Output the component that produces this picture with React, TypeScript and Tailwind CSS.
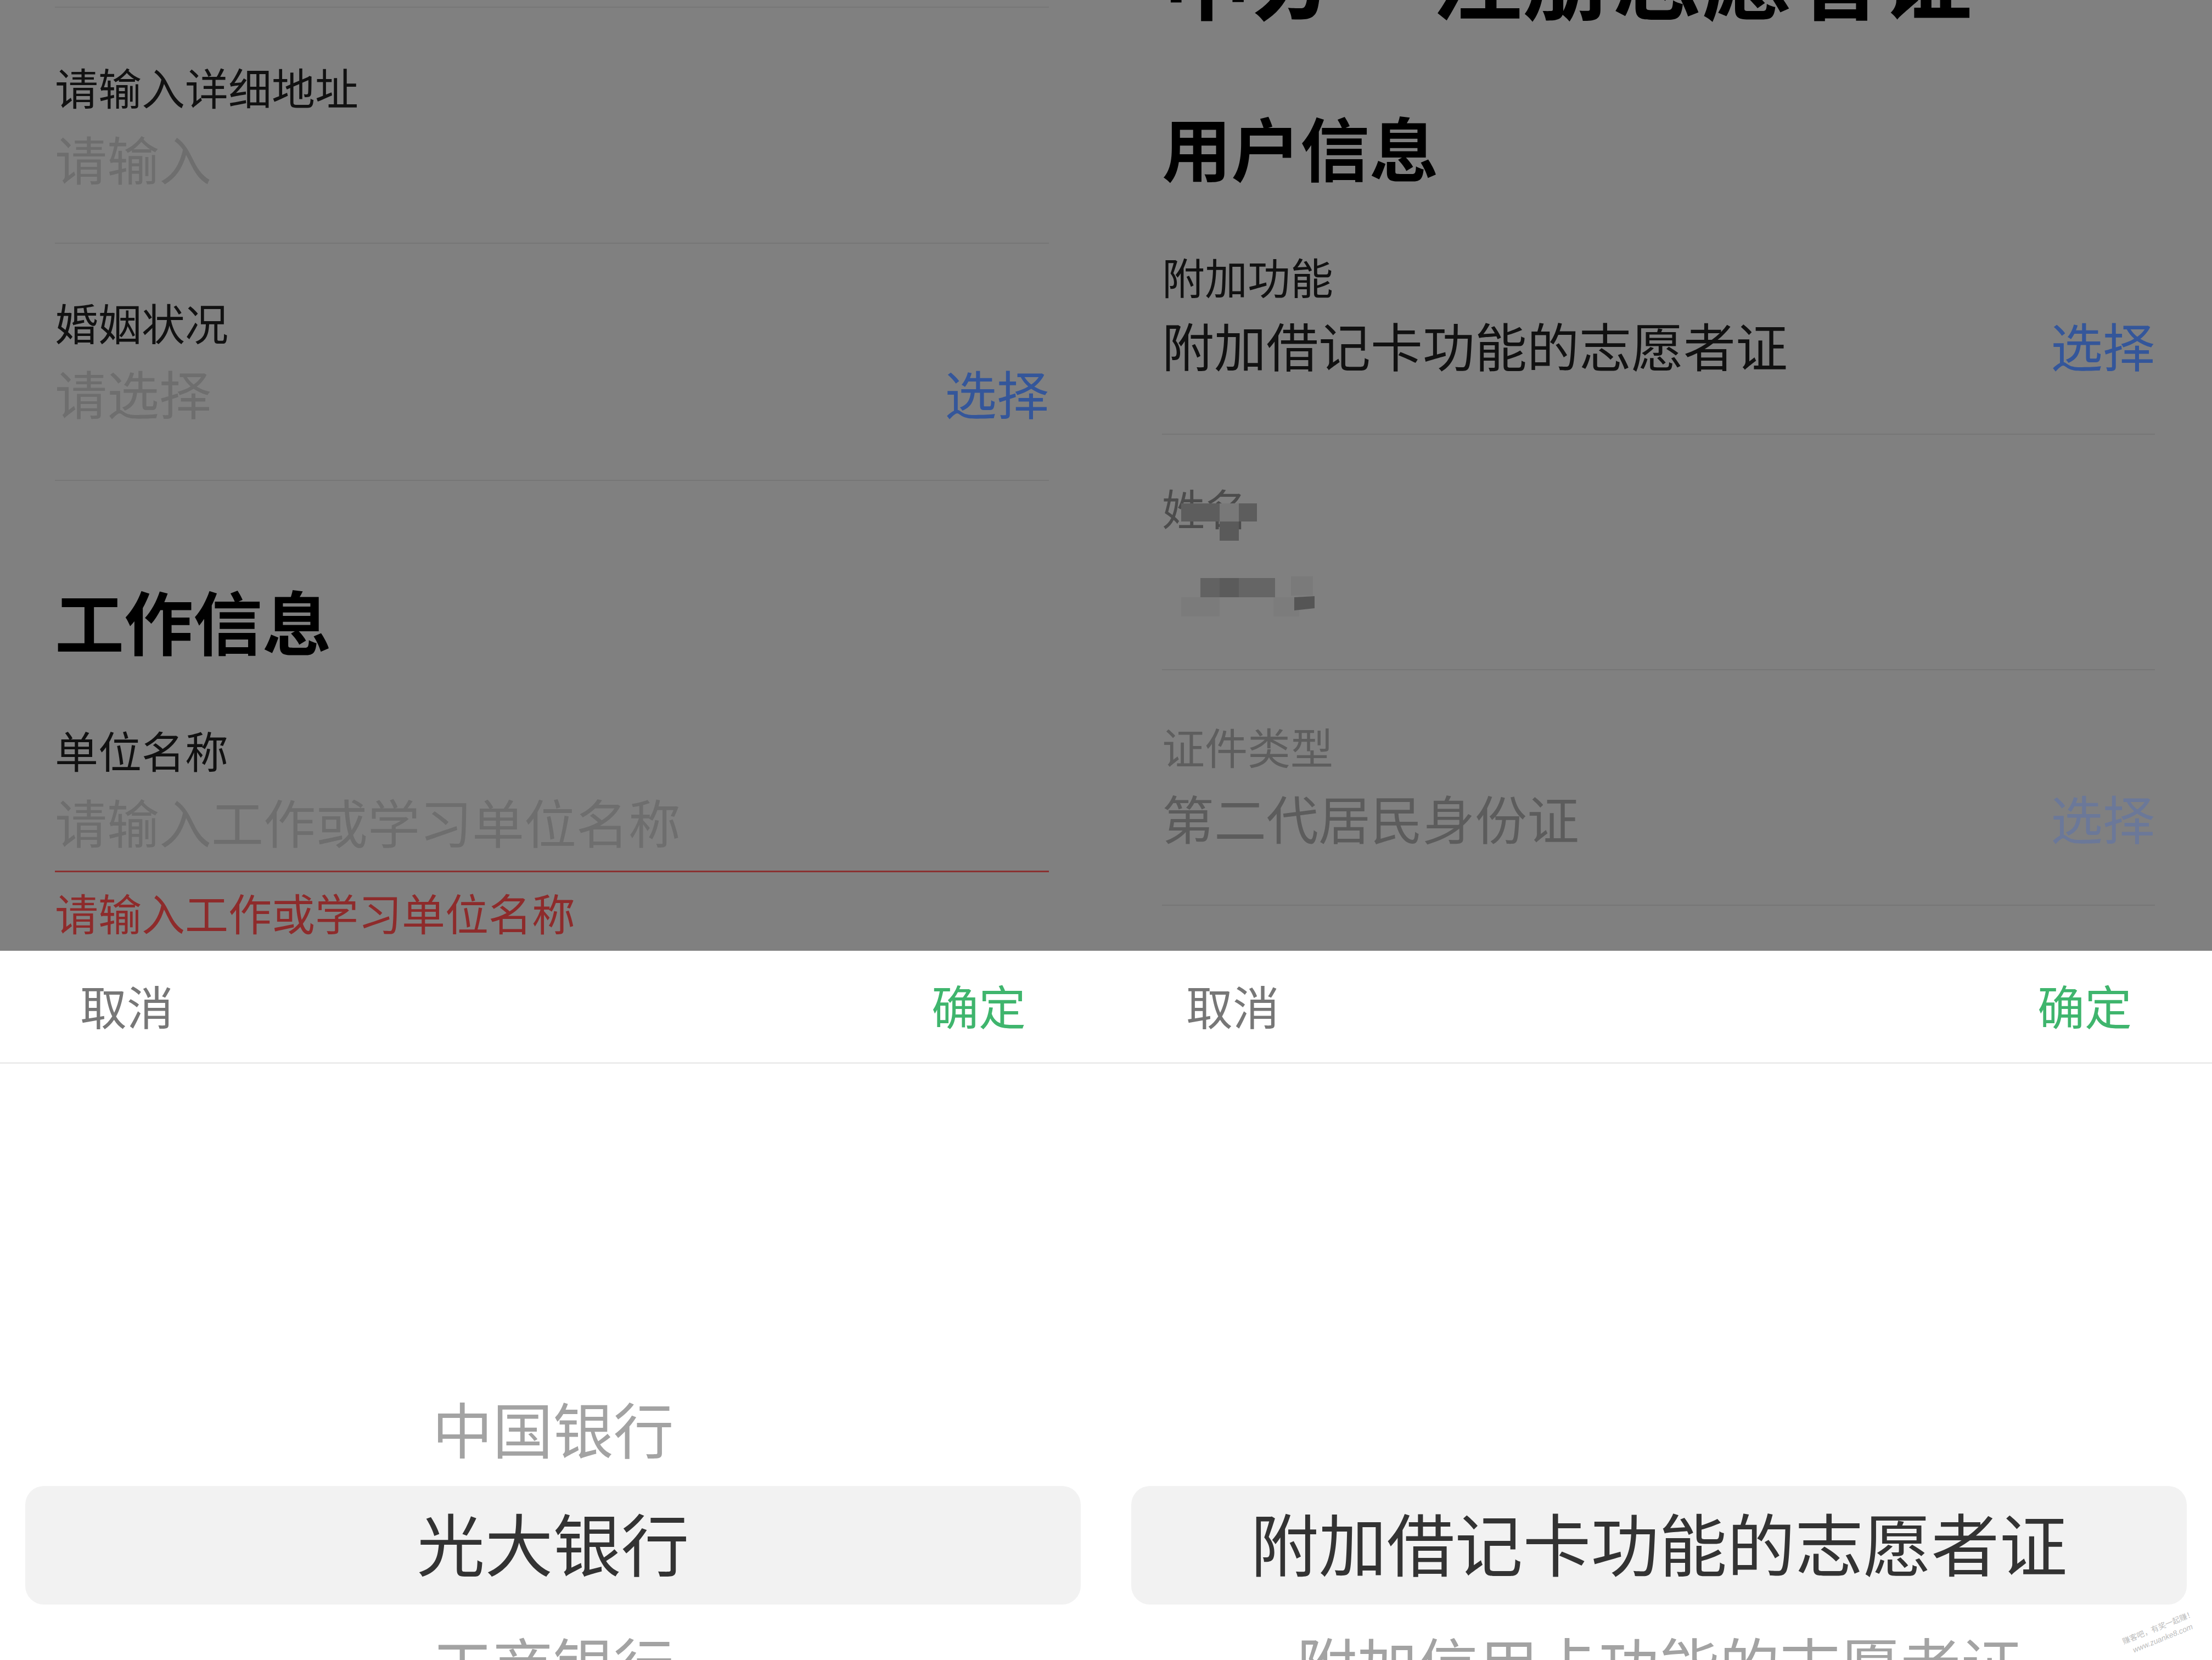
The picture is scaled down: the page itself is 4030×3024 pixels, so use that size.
const PICKERS = [
  {
    above: "中国银行",
    selected: "光大银行",
    below: "工商银行",
  },
  {
    above: "",
    selected: "附加借记卡功能的志愿者证",
    below: "附加信用卡功能的志愿者证",
  },
];

function PickerSheet({ above, selected, below, watermark }: { above: string; selected: string; below: string; watermark?: boolean }) {
  return (
    <div className="relative h-[1292px] bg-white overflow-hidden">
      <div className="h-[206px] flex items-center justify-between px-[146px] pb-[6px] border-b-[3px] border-[#ececec]">
        <span className="text-[85px] leading-[100px] text-[#777]">取消</span>
        <span className="text-[86px] leading-[100px] text-[#3fb56d]">确定</span>
      </div>
      <div className="pt-[556px]">
        <div className="h-[213px] flex items-center justify-center text-[110px] text-[#a3a3a3]">{above}</div>
        <div className="mx-[46px] h-[216px] rounded-[34px] bg-[#f2f2f2] flex items-center justify-center pb-[14px] text-[124px] text-[#333]">
          {selected}
        </div>
        <div className="h-[213px] flex items-center justify-center text-[110px] text-[#a3a3a3]">{below}</div>
      </div>
      {watermark && (
        <div className="absolute right-[24px] bottom-[28px] rotate-[-22deg] text-[#bdbdbd] text-[14px] leading-[22px] text-center">
          <p>赚客吧，有奖一起赚！</p>
          <p className="font-['Liberation_Sans',sans-serif] italic">www.zuanke8.com</p>
        </div>
      )}
    </div>
  );
}

function LeftForm() {
  return (
    <div className="h-[1732px] overflow-hidden bg-[#808080] pl-[100px] pr-[104px]">
      <div className="h-[14px] border-b-2 border-[#767676]" />

      <div className="pt-[97px] pb-[98px] border-b-2 border-[#767676]">
        <p className="text-[79px] leading-[94px] text-[#111]">请输入详细地址</p>
        <p className="mt-[27px] text-[95px] leading-[112px] text-[#6e6e6e]">请输入</p>
      </div>

      <div className="pt-[96px] pb-[103px] border-b-2 border-[#767676]">
        <p className="text-[79px] leading-[94px] text-[#111]">婚姻状况</p>
        <div className="mt-[25px] flex items-center justify-between text-[95px] leading-[112px]">
          <span className="text-[#6e6e6e]">请选择</span>
          <span className="text-[#34569a]">选择</span>
        </div>
      </div>

      <h2 className="mt-[178px] text-[126px] leading-[150px] font-bold text-black">工作信息</h2>

      <p className="mt-[115px] text-[79px] leading-[94px] text-[#111]">单位名称</p>
      <div className="pb-[34px] border-b-[3px] border-[#8a3232]">
        <p className="mt-[27px] text-[95px] leading-[112px] text-[#6e6e6e]">请输入工作或学习单位名称</p>
      </div>
      <p className="mt-[26px] text-[79px] leading-[94px] text-[#8e2b2b]">请输入工作或学习单位名称</p>
    </div>
  );
}

function Mosaic() {
  // pixelated name field, panel coordinates offset by (130, 900)
  return (
    <svg className="absolute left-[130px] top-[900px]" width="270" height="240" viewBox="0 0 270 240">
      <rect x="7" y="17" width="70" height="33" fill="#5d5d5d" />
      <rect x="77" y="17" width="35" height="33" fill="#787878" />
      <rect x="112" y="17" width="33" height="33" fill="#5d5d5d" />
      <rect x="77" y="50" width="35" height="35" fill="#5a5a5a" />
      <rect x="42" y="153" width="35" height="35" fill="#626262" />
      <rect x="77" y="153" width="35" height="35" fill="#5b5b5b" />
      <rect x="112" y="153" width="66" height="35" fill="#656565" />
      <rect x="207" y="150" width="40" height="35" fill="#7a7a7a" />
      <rect x="7" y="188" width="70" height="35" fill="#7b7b7b" />
      <rect x="175" y="188" width="47" height="35" fill="#7c7c7c" />
      <path d="M213 188 L250 186 L250 208 L213 212 Z" fill="#555" />
    </svg>
  );
}

function RightForm() {
  return (
    <div className="relative h-[1732px] overflow-hidden bg-[#808080] pl-[102px] pr-[104px]">
      <h1 className="mt-[-148px] text-[164px] leading-[200px] font-bold text-black whitespace-nowrap">申办“注册志愿者证”</h1>

      <h2 className="mt-[139px] text-[126px] leading-[150px] font-bold text-black">用户信息</h2>

      <div className="mt-[115px] pb-[106px] border-b-2 border-[#767676]">
        <p className="text-[78px] leading-[94px] text-[#111]">附加功能</p>
        <div className="mt-[22px] flex items-center justify-between text-[95px] leading-[112px]">
          <span className="text-[#111]">附加借记卡功能的志愿者证</span>
          <span className="text-[#34569a]">选择</span>
        </div>
      </div>

      <div className="pt-[85px] pb-[90px] border-b-2 border-[#767676]">
        <p className="text-[78px] leading-[94px] text-[#4c4c4c]">姓名</p>
        <div className="mt-[46px] h-[112px]" />
      </div>

      <div className="pt-[91px] pb-[103px] border-b-2 border-[#767676]">
        <p className="text-[78px] leading-[94px] text-[#5e5e5e]">证件类型</p>
        <div className="mt-[27px] flex items-center justify-between text-[95px] leading-[112px]">
          <span className="text-[#5c5c5c]">第二代居民身份证</span>
          <span className="text-[#6b7899]">选择</span>
        </div>
      </div>

      <Mosaic />
    </div>
  );
}

export default function App() {
  return (
    <div className="w-[4030px] h-[3024px] flex overflow-hidden font-['Noto_Sans_CJK_SC','Noto_Sans',sans-serif]">
      <div className="w-[2015px] flex flex-col">
        <LeftForm />
        <PickerSheet {...PICKERS[0]} />
      </div>
      <div className="w-[2015px] flex flex-col">
        <RightForm />
        <PickerSheet {...PICKERS[1]} watermark />
      </div>
    </div>
  );
}
